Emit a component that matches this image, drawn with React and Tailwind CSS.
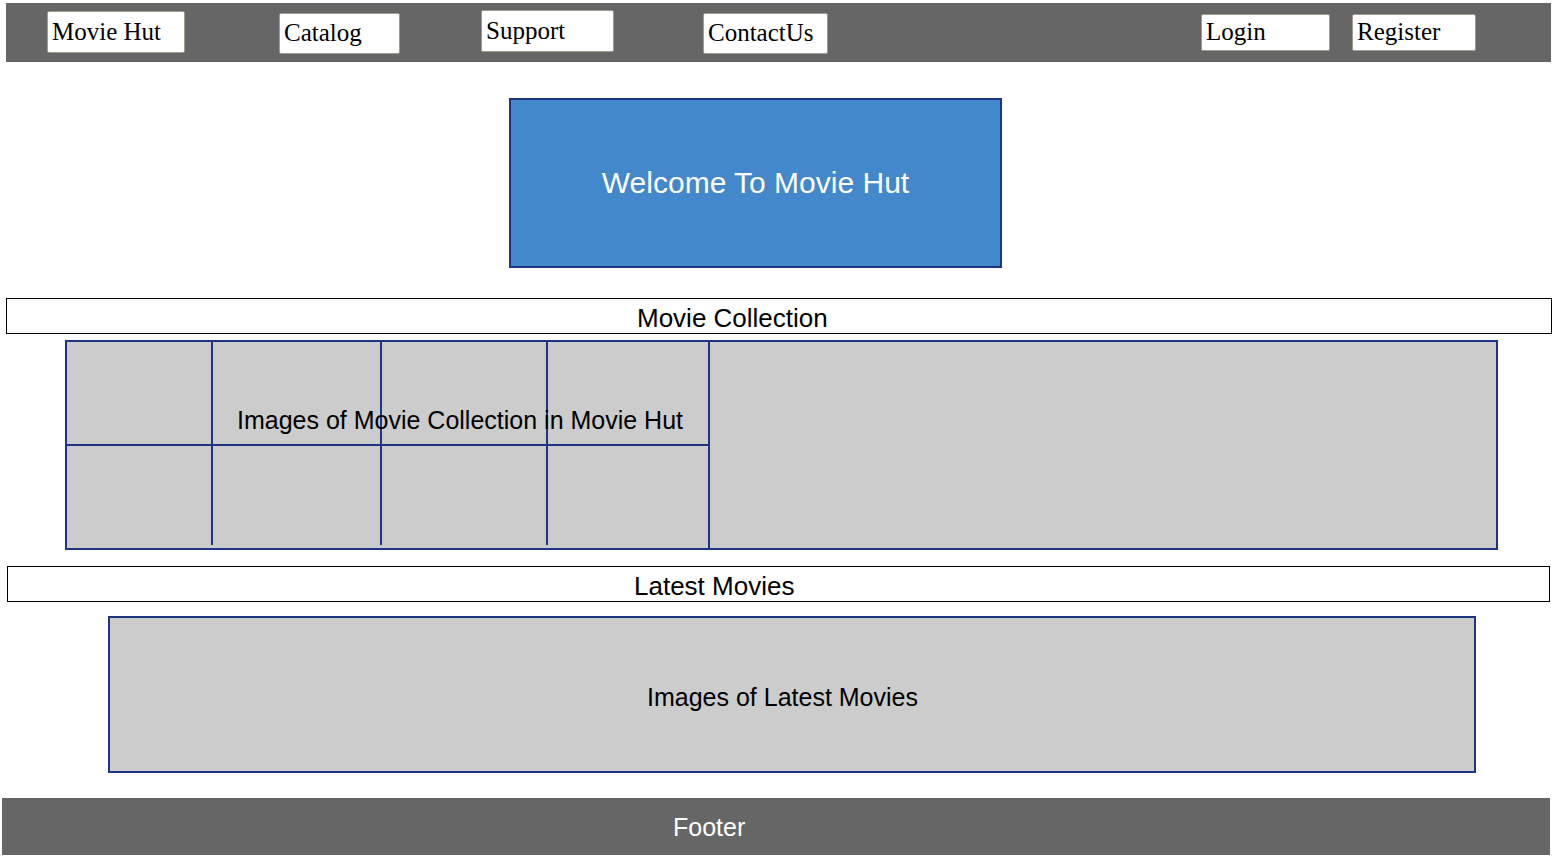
const navLinks = [
  { label: 'Movie Hut', ml: 'ml-[41px]', mt: 'mt-[8px]', w: 'w-[138px]', h: 'h-[42px]' },
  { label: 'Catalog', ml: 'ml-[94px]', mt: 'mt-[10px]', w: 'w-[121px]', h: 'h-[41px]' },
  { label: 'Support', ml: 'ml-[81px]', mt: 'mt-[7px]', w: 'w-[133px]', h: 'h-[42px]' },
  { label: 'ContactUs', ml: 'ml-[89px]', mt: 'mt-[10px]', w: 'w-[125px]', h: 'h-[41px]' },
  { label: 'Login', ml: 'ml-[373px]', mt: 'mt-[11px]', w: 'w-[129px]', h: 'h-[37px]' },
  { label: 'Register', ml: 'ml-[22px]', mt: 'mt-[11px]', w: 'w-[124px]', h: 'h-[37px]' },
];

function NavButton({ label, ml, mt, w, h }) {
  return (
    <a
      href="#"
      className={`${ml} ${mt} ${w} ${h} flex items-center bg-white border border-[#a39a8f] rounded-[2px] pl-[4px] pb-[2px] text-[25px] leading-[29px] text-black font-['Liberation_Serif',serif]`}
    >
      {label}
    </a>
  );
}

export default function App() {
  return (
    <div className="w-[1557px] bg-white font-['Liberation_Sans',Arial,sans-serif] text-black">
      {/* Header */}
      <nav className="mt-[3px] ml-[6px] w-[1545px] h-[59px] bg-[#666666] flex items-start">
        {navLinks.map((l) => (
          <NavButton key={l.label} {...l} />
        ))}
      </nav>

      {/* Welcome banner */}
      <div className="mt-[36px] ml-[509px] w-[493px] h-[170px] bg-[#4488cc] border-2 border-[#1f3483] flex items-center justify-center">
        <h1 className="text-white text-[30px] leading-[34px]">Welcome To Movie Hut</h1>
      </div>

      {/* Movie Collection */}
      <div className="mt-[30px] ml-[6px] w-[1546px] h-[36px] border border-black flex items-center pt-[4px]">
        <h2 className="ml-[630px] text-[26px] leading-[29px]">Movie Collection</h2>
      </div>

      <div className="relative mt-[6px] ml-[65px] w-[1433px] h-[210px] border-2 border-[#1f3483] bg-[#cccccc]">
        <div className="w-[643px] h-full border-r-2 border-[#1f3483]">
          <div className="grid grid-cols-[146px_169px_166px_160px]">
            {[0, 1, 2, 3].map((i) => (
              <div key={'t' + i} className={`h-[104px] border-b-2 border-[#1f3483] ${i < 3 ? 'border-r-2' : ''}`} />
            ))}
            {[0, 1, 2, 3].map((i) => (
              <div key={'b' + i} className={`h-[99px] border-[#1f3483] ${i < 3 ? 'border-r-2' : ''}`} />
            ))}
          </div>
        </div>
        <p className="absolute left-[170px] top-[64px] text-[25px] leading-[28px] whitespace-nowrap">
          Images of Movie Collection in Movie Hut
        </p>
      </div>

      {/* Latest Movies */}
      <div className="mt-[16px] ml-[7px] w-[1543px] h-[36px] border border-black flex items-center pt-[4px]">
        <h2 className="ml-[626px] text-[26px] leading-[29px]">Latest Movies</h2>
      </div>

      <div className="mt-[14px] ml-[108px] w-[1368px] h-[157px] border-2 border-[#1f3483] bg-[#cccccc] flex items-center pt-[4px]">
        <p className="ml-[537px] text-[25px] leading-[28px]">Images of Latest Movies</p>
      </div>

      {/* Footer */}
      <footer className="mt-[25px] ml-[2px] w-[1548px] h-[57px] bg-[#666666] flex items-center">
        <span className="ml-[671px] text-white text-[25px] leading-[28px]">Footer</span>
      </footer>
    </div>
  );
}
